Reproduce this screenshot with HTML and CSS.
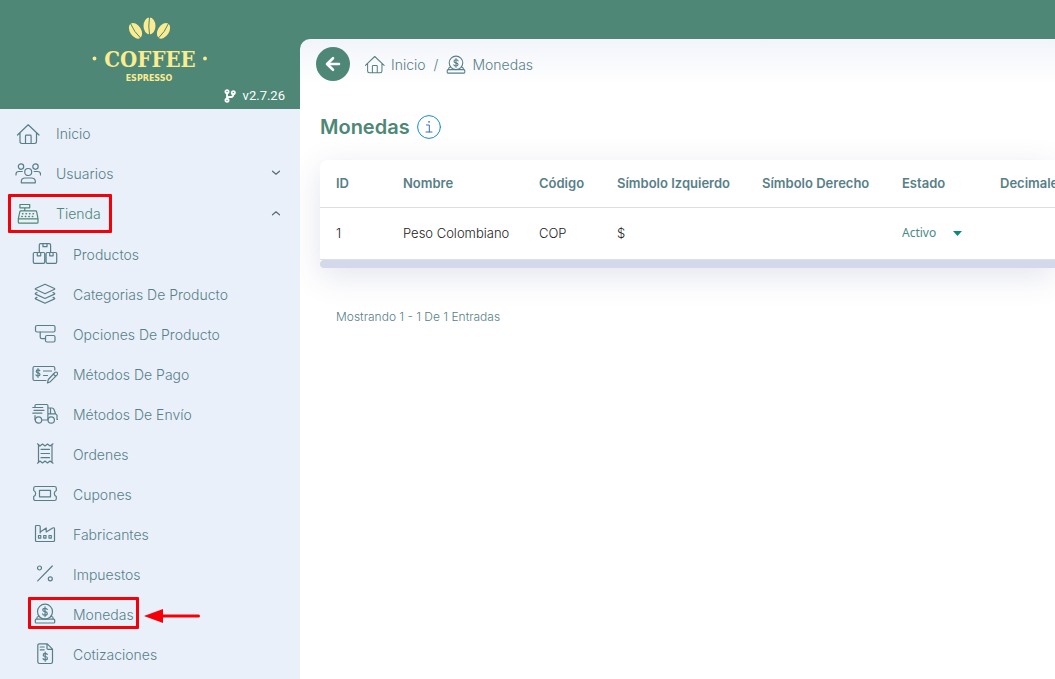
FILE: index.html
```html
<!DOCTYPE html>
<html lang="es">
<head>
<meta charset="utf-8">
<title>Monedas</title>
<link rel="stylesheet" href="styles.css">
</head>
<body>
<svg class="defs" aria-hidden="true">
  <symbol id="home" viewBox="0 0 26 24"><path d="M2.5 13 13.2 2.8 24 13M5 11v8.600q0 1.900 2 1.900h12.500q2 0 2-1.900V11M10.500 21.500V14q0-.8.8-.8h4q.8 0 .8.8v7.500"/></symbol>
  <symbol id="coin" viewBox="0 0 26 24"><circle cx="13" cy="8.700" r="7.500"/><path d="M15.300 6.500Q14.800 5.300 13 5.300 10.800 5.300 10.800 7 10.800 8.400 13 8.700 15.300 9 15.300 10.500 15.300 12.200 13 12.200 11 12.200 10.600 10.800M13 3.800v9.800M6.700 13.500Q5 13.500 4.800 15.300L4.700 16.200M19.300 13.500Q21 13.500 21.200 15.300L21.300 16.200M4.300 16.200h17.400q1 0 1 1v2q0 .8-.8.8H4.100q-.8 0-.8-.8v-2q0-1 1-1z"/></symbol>
</svg>
<div class="app">
  <aside class="sidebar">
    <header class="brand">
      <svg class="logo" viewBox="0 0 120 70" role="img" aria-label="Coffee Espresso">
        <g class="beans">
          <ellipse cx="59.500" cy="10" rx="6" ry="8.500"/>
          <ellipse cx="45.500" cy="14.800" rx="5.600" ry="8.600" transform="rotate(-33 45.500 14.800)"/>
          <ellipse cx="73.500" cy="14.800" rx="5.600" ry="8.600" transform="rotate(33 73.500 14.800)"/>
          <circle cx="4.500" cy="42.500" r="1.900"/><circle cx="115" cy="42.500" r="1.900"/>
        </g>
        <path class="seam" d="M59.500 1q-1.500 9 0 18M40.500 7.500Q44 16 50.500 22M78.500 7.500Q75 16 68.500 22"/>
        <text class="logo-name" x="60" y="51">COFFEE</text>
        <text class="logo-sub" x="59" y="65">ESPRESSO</text>
      </svg>
      <p class="version">
        <svg class="branch" viewBox="0 0 12 14" aria-hidden="true"><circle cx="3" cy="2.700" r="1.600"/><circle cx="3" cy="11.300" r="1.600"/><circle cx="9.300" cy="3.700" r="1.600"/><path d="M3 4v6M9.300 5v.8Q9.300 8 7 8H5Q3 8 3 10"/></svg>
        v2.7.26
      </p>
    </header>
    <nav class="menu" aria-label="Principal">
      <a class="item item-first" href="#"><svg class="icon"><use href="#home"/></svg>Inicio</a>
      <button class="item" type="button" aria-expanded="false">
        <svg class="icon" viewBox="0 0 26 24"><circle cx="6" cy="4.600" r="2.700"/><circle cx="20.500" cy="4.600" r="2.700"/><circle cx="13.200" cy="10" r="3.500"/><path d="M6.300 20.800v-1.300q0-3.500 4-3.500h6q4 0 4 3.500v1.300zM1 13v-1q0-2.500 2.800-2.500h3.500M25.500 13v-1q0-2.500-2.800-2.500h-3.500"/></svg>
        Usuarios
        <svg class="chevron" viewBox="0 0 10 6"><path d="m1.500 1.200 3.500 3 3.500-3"/></svg>
      </button>
      <button class="item item-open" type="button" aria-expanded="true">
        <svg class="icon" viewBox="0 0 26 24"><path d="M4.900 2.500h9.800v3.300H4.900zM9.800 5.800v3M6 8.800h14.500q1 0 1.200 1l1.300 7H3.300l1.500-7q.2-1 1.200-1zM3.300 16.800h19.700v3.400q0 1-1 1H4.300q-1 0-1-1z"/><path class="dots" d="M7.500 11.700h12M6.800 14.500h13"/></svg>
        Tienda
        <svg class="chevron" viewBox="0 0 10 6"><path d="m1.500 4.800 3.500-3 3.500 3"/></svg>
        <span class="mark mark-top"></span>
      </button>
      <div class="submenu">
        <a class="item" href="#"><svg class="icon" viewBox="0 0 26 24"><path d="M7.300 9V2q0-1.300 1.300-1.300h8.700q1.300 0 1.300 1.300v7M11 .7v3h4v-3M2.500 9.500h9q1.200 0 1.200 1.200v8.300q0 1.300-1.200 1.300h-9q-1.200 0-1.200-1.300v-8.300q0-1.200 1.200-1.200zM15.300 9.500h8.200q1.200 0 1.200 1.200v8.300q0 1.300-1.200 1.300h-8.200q-1.200 0-1.200-1.300v-8.300q0-1.200 1.200-1.200zM5.300 9.500v3.300h3.400V9.500M17.700 9.500v3.300h3.400V9.500"/></svg>Productos</a>
        <a class="item" href="#"><svg class="icon" viewBox="0 0 26 24"><path d="M13 1.200 22.500 5.500Q23 6 22.500 6.300L13 10.700 3.500 6.300Q3 6 3.500 5.500zM5 9.500l-1.500.8q-.5.400 0 .8L13 15.500l9.500-4.400q.5-.4 0-.8L21 9.500M5 14.300l-1.500.8q-.5.400 0 .8L13 20.200l9.500-4.300q.5-.4 0-.8l-1.500-.8"/></svg>Categorias De Producto</a>
        <a class="item" href="#"><svg class="icon" viewBox="0 0 26 24"><rect x="3.500" y="2.500" width="19.500" height="6.500" rx="1.500"/><rect x="13.500" y="12.500" width="9.500" height="6.500" rx="1.500"/><path d="M8.200 9v5q0 1.700 1.700 1.700h3.600"/></svg>Opciones De Producto</a>
        <a class="item" href="#"><svg class="icon" viewBox="0 0 26 24"><path d="M22.800 7V5q0-1.500-1.500-1.500H2.500Q1 3.500 1 5v11q0 1.500 1.500 1.500H14M7.800 7.800Q7.500 6.900 6 6.900 4.200 6.900 4.200 8.300 4.200 9.500 6 9.800 8 10 8 11.400 8 12.900 6 12.900 4.200 12.900 4 11.800M6 5.500v8.800M11.500 8h8M11.500 12.500h4M15.500 20l.8-3.500 6.500-7q1.200-1 2.300 0 1 1 0 2.300l-6.700 6.900zM21.300 11l2.300 2.300"/></svg>Métodos De Pago</a>
        <a class="item" href="#"><svg class="icon" viewBox="0 0 26 24"><path d="M3 4V2.700q0-1.200 1.200-1.200h10.500q1.200 0 1.200 1.200v14M.8 4.500h10M2 7.300h10M.8 10.200h9M3 12.500v4.200M9.700 17H16M15.900 5h4q1.500 0 2 1.300l1.700 4.500 1.400 1.400v4.300h1M16 10.800h7.500M18.500 5v5.800"/><circle cx="6.500" cy="17" r="3.200"/><circle cx="19.200" cy="17" r="3.200"/></svg>Métodos De Envío</a>
        <a class="item" href="#"><svg class="icon" viewBox="0 0 26 24"><path d="M5.500.8 8 3l2.500-2L13 3l2.500-2L18 3l3-2.200M5.500 20.200 8 18l2.500 2 2.500-2 2.500 2L18 18l3 2.200M6.500 2v17M20 2v17M9 6.300h8.500M9 10.500h8.500M9 14.700h8.500"/></svg>Ordenes</a>
        <a class="item" href="#"><svg class="icon" viewBox="0 0 26 24"><path d="M3.500 3.500h19q1.800 0 1.800 1.800v2.200q-2 1-2 3t2 3v2.200q0 1.800-1.800 1.800h-19q-1.800 0-1.800-1.800v-2.200q2-1 2-3t-2-3V5.300q0-1.800 1.800-1.800zM7.500 7.300h11v6.500h-11z"/></svg>Cupones</a>
        <a class="item" href="#"><svg class="icon" viewBox="0 0 26 24"><path d="M3.500 17.500V3.500q0-1 1-1h2.700q1 0 1 1V9l6-4v4l6.500-4q1.800-.8 1.800 1v11.500q0 1-1 1h-17q-1 0-1-1zM6.500 12.500h2.300v2.600H6.500zM11.700 12.500H14v2.600h-2.300zM17 12.500h2.300v2.600H17zM8.200 9v1"/></svg>Fabricantes</a>
        <a class="item" href="#"><svg class="icon" viewBox="0 0 26 24"><circle cx="7.500" cy="5" r="2"/><circle cx="18.300" cy="15.800" r="2"/><path d="M20.300 3 5.700 17.800"/></svg>Impuestos</a>
        <a class="item" href="#" aria-current="page"><svg class="icon"><use href="#coin"/></svg>Monedas
          <span class="mark mark-sub"></span>
          <svg class="pointer" viewBox="0 0 56 14" aria-hidden="true"><path d="M0 7 19 0v14z"/><path d="M17 5.500h37.500a1.500 1.500 0 0 1 0 3H17z"/></svg>
        </a>
        <a class="item" href="#"><svg class="icon" viewBox="0 0 26 24"><path d="M7.500.8h7.800l5.200 5.400v12.600q0 1.700-1.700 1.700H7.500q-1.700 0-1.700-1.700V2.500Q5.800.8 7.500.8zM15 1v4.200q0 1.200 1.200 1.200h4M8.200 4h4M8.200 6.800h4M15.300 11.500Q15 10.300 13.200 10.300 11.200 10.300 11.200 11.900 11.200 13.200 13.200 13.500 15.400 13.700 15.400 15.200 15.400 16.800 13.200 16.800 11.300 16.800 11 15.500M13.200 9v9.200"/></svg>Cotizaciones</a>
      </div>
    </nav>
  </aside>
  <main class="main">
    <div class="topbar">
      <button class="back" type="button" aria-label="Volver"><svg class="back-arrow" viewBox="0 0 16 16"><path d="M14 8H2.500M8 2.200 2 8l6 5.800"/></svg></button>
      <nav class="crumbs" aria-label="Ruta">
        <a class="crumb" href="#"><svg class="icon-small" viewBox="2 2 23 20"><use href="#home" width="26" height="24"/></svg>Inicio</a>
        <span class="slash">/</span>
        <a class="crumb" href="#"><svg class="icon-small" viewBox="2 0 22 21"><use href="#coin" width="26" height="24"/></svg>Monedas</a>
      </nav>
    </div>
    <div class="heading">
      <h1 class="title">Monedas</h1>
      <button class="info" type="button" aria-label="Información"><svg class="info-icon" viewBox="0 0 24 24"><circle class="ring" cx="12" cy="12" r="11.400"/><path class="letter" d="M9.500 10h2.800v7M9 17h6"/><circle class="tittle" cx="12" cy="6.800" r=".9"/></svg></button>
    </div>
    <section class="card">
      <table class="table">
        <colgroup><col class="c-id"><col class="c-name"><col class="c-code"><col class="c-left"><col class="c-right"><col class="c-state"><col class="c-dec"></colgroup>
        <thead><tr><th>ID</th><th>Nombre</th><th>Código</th><th>Símbolo Izquierdo</th><th>Símbolo Derecho</th><th>Estado</th><th>Decimales</th></tr></thead>
        <tbody><tr><td>1</td><td>Peso Colombiano</td><td>COP</td><td>$</td><td></td>
          <td><span class="state"><select class="state-select" aria-label="Estado"><option>Activo</option><option>Inactivo</option></select><svg class="caret" viewBox="0 0 9 5"><path d="M0 0h9L4.500 5z"/></svg></span></td><td></td></tr></tbody>
      </table>
      <div class="scroll"></div>
    </section>
    <p class="summary">Mostrando 1 - 1 De 1 Entradas</p>
  </main>
</div>
</body>
</html>
```
FILE: styles.css
```css
* { box-sizing: border-box; }
body {
  margin: 0;
  font-family: Inter, "Open Sans", sans-serif;
  font-size: 14px;
  font-weight: 300;
  color: #587f88;
  background: #fff;
}
.defs { position: absolute; width: 0; height: 0; }
button { font: inherit; color: inherit; background: none; border: 0; padding: 0; cursor: pointer; }
a { color: inherit; text-decoration: none; }
svg { flex: none; fill: none; stroke: currentColor; stroke-width: 1.2; stroke-linecap: round; stroke-linejoin: round; }

.app {
  display: flex;
  min-height: 100vh;
  background: linear-gradient(#4e8775, #4e8775) top / 100% 109px no-repeat, #e9f0fa;
}
.sidebar { flex: none; width: 300px; height: 100vh; overflow: hidden; }
.brand { display: flex; flex-direction: column; height: 109px; padding-top: 16px; color: #fff; }
.logo { width: 120px; height: 70px; margin: 0 auto; stroke: none; }
.beans { fill: #fbeb91; }
.seam { stroke: #4e8775; stroke-width: 1; }
.logo-name { font: bold 22px "DejaVu Serif Condensed", "Liberation Serif", serif; fill: #fbeb91; text-anchor: middle; }
.logo-sub { font: bold 8px "DejaVu Sans", sans-serif; fill: #fbeb91; text-anchor: middle; }
.version {
  display: flex;
  align-items: center;
  justify-content: flex-end;
  gap: 7px;
  margin: 0;
  padding-right: 15px;
  font-family: Roboto, sans-serif;
  font-size: 13px;
  font-weight: 400;
  line-height: 20px;
}
.branch { width: 12px; height: 14px; stroke-width: 1.8; }

.menu { padding-top: 5px; }
.item {
  position: relative;
  display: flex;
  align-items: center;
  gap: 15px;
  width: 100%;
  height: 40px;
  padding: 0 19px 0 15px;
  text-align: left;
}
.item-first { height: 39px; }
.icon { width: 26px; height: 24px; margin-top: 2px; }
.item-first .icon { margin-top: 0; }
.item-open { color: #4e8775; }
.dots { stroke-width: 1.4; stroke-dasharray: .5 3; }
.chevron { width: 10px; height: 6px; margin-left: auto; stroke: #5c6b70; }
.submenu { padding-top: 1px; }
.submenu .item { padding-left: 32px; }
.mark { position: absolute; border: 3px solid #f50008; border-radius: 1px; }
.mark-top { left: 8px; top: 1px; width: 104px; height: 39px; }
.mark-sub { left: 28px; top: 3px; width: 111px; height: 32px; }
.pointer { position: absolute; left: 144px; top: 15px; width: 56px; height: 14px; fill: #f50008; stroke: none; }

.main {
  flex: 1;
  min-width: 0;
  margin-top: 39px;
  overflow: hidden;
  border-top-left-radius: 10px;
  background: linear-gradient(#f1f4fa, #fff 45px);
}
.topbar { display: flex; align-items: center; gap: 15px; padding: 8px 16px; }
.back { display: grid; place-items: center; width: 34px; height: 34px; border-radius: 50%; background: #4e8775; color: #fff; }
.back-arrow { width: 16px; height: 16px; stroke-width: 2.6; }
.crumbs, .crumb { display: flex; align-items: center; }
.crumbs { gap: 8px; }
.crumb { gap: 6px; }
.icon-small { width: 20px; height: 19px; }
.heading { display: flex; align-items: center; gap: 7px; padding: 25px 20px 20px; }
.title { margin: 0; font-size: 20px; font-weight: 600; line-height: 26px; color: #4e8775; }
.info { width: 24px; height: 24px; color: #168bd0; }
.info-icon { display: block; width: 24px; height: 24px; stroke-width: 1; }
.letter { stroke: #3c6fb5; }
.tittle { fill: #3c6fb5; stroke: none; }

.card {
  margin-left: 20px;
  border-radius: 8px 0 0 4px;
  background: #fff;
  box-shadow: 0 8px 32px rgba(60, 70, 130, .14);
}
.table { width: 820px; table-layout: fixed; border-collapse: collapse; font-size: 13px; }
.c-id { width: 67px; }
.c-name { width: 136px; }
.c-code { width: 78px; }
.c-left { width: 145px; }
.c-right { width: 140px; }
.c-state { width: 98px; }
.table th, .table td { padding: 0 0 0 16px; text-align: left; white-space: nowrap; border-bottom: 1px solid #dcdfe2; }
.table th { height: 47px; font-weight: 600; }
.table td { height: 52px; color: #222; font-weight: 300; }
.state { display: flex; align-items: center; gap: 14px; color: #0c8a78; }
.state-select {
  appearance: none;
  width: 37px;
  padding: 0 0 2px;
  border: 0;
  background: none;
  color: #4b8a86;
  font: 400 12px "Noto Sans", sans-serif;
}
.caret { width: 9px; height: 5px; fill: currentColor; stroke: none; pointer-events: none; }
.scroll { height: 8px; border-radius: 4px 0 0 4px; background: #d3d9eb; }
.summary { margin: 0; padding: 39px 36px; font-size: 12px; line-height: 20px; }
```
